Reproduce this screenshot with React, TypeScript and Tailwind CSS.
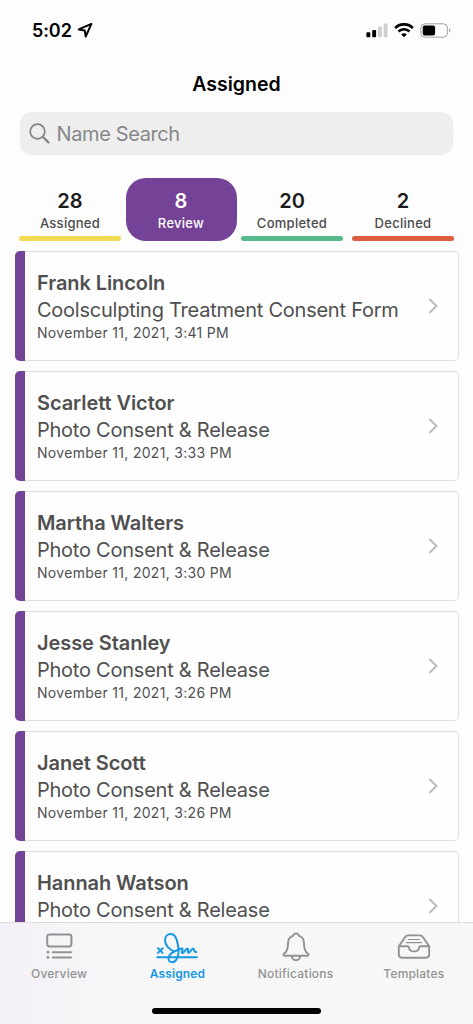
import React from "react";

const tabs = [
  { count: 28, label: "Assigned", bar: "bg-[#f0da54]" },
  { count: 8, label: "Review", bar: "", active: true },
  { count: 20, label: "Completed", bar: "bg-[#55bb8a]" },
  { count: 2, label: "Declined", bar: "bg-[#dc5c40]" },
];

const forms = [
  {
    name: "Frank Lincoln",
    form: "Coolsculpting Treatment Consent Form",
    date: "November 11, 2021, 3:41 PM",
  },
  {
    name: "Scarlett Victor",
    form: "Photo Consent & Release",
    date: "November 11, 2021, 3:33 PM",
  },
  {
    name: "Martha Walters",
    form: "Photo Consent & Release",
    date: "November 11, 2021, 3:30 PM",
  },
  {
    name: "Jesse Stanley",
    form: "Photo Consent & Release",
    date: "November 11, 2021, 3:26 PM",
  },
  {
    name: "Janet Scott",
    form: "Photo Consent & Release",
    date: "November 11, 2021, 3:26 PM",
  },
  {
    name: "Hannah Watson",
    form: "Photo Consent & Release",
    date: "",
  },
];

const StatusBar = () => (
  <div className="flex h-[60px] shrink-0 items-center justify-between pl-[32px] pr-[22px]">
    <div className="flex items-center gap-[5px] pt-px">
      <span className="text-[18px] font-semibold leading-6 tracking-[-0.1px]">
        5:02
      </span>
      <svg width="17" height="17" viewBox="0 0 17 17" fill="none">
        <path
          d="M14.4 1.8 1.8 7.4l6 1.2.9 6z"
          stroke="#000"
          strokeWidth="2"
          strokeLinejoin="round"
        />
      </svg>
    </div>
    <div className="flex items-center gap-[6px]">
      <svg width="22" height="15" viewBox="0 0 22 15">
        <rect x="0.4" y="9.3" width="3.9" height="5" rx="1" />
        <rect x="6.2" y="7" width="3.9" height="7.3" rx="1" />
        <rect x="12" y="3.6" width="3.9" height="10.7" rx="1" fill="#cfcfcf" />
        <rect x="17.7" y="0.4" width="3.9" height="13.9" rx="1" fill="#cfcfcf" />
      </svg>
      <svg width="20" height="15" viewBox="0 0 20 15" fill="none" stroke="#000">
        <path d="M1.2 5a12.4 12.4 0 0 1 17.6 0" strokeWidth="2.7" />
        <path d="M4.5 8.5a7.8 7.8 0 0 1 11 0" strokeWidth="2.6" />
        <path
          d="M10 14.2 7.2 11.5a3.9 3.9 0 0 1 5.6 0z"
          fill="#000"
          stroke="none"
        />
      </svg>
      <svg width="31" height="15" viewBox="0 0 31 15" fill="none">
        <rect x="0.8" y="0.8" width="26.6" height="13.4" rx="4" stroke="#a3a3a3" />
        <rect x="2.7" y="2.6" width="12.4" height="9.8" rx="2" fill="#000" />
        <path d="M29.1 5.3v4.4c1.8-.8 1.8-3.6 0-4.4z" fill="#a3a3a3" />
      </svg>
    </div>
  </div>
);

const OverviewIcon = () => (
  <svg width="28" height="28" viewBox="0 0 28 28" fill="none" stroke="#929292" strokeWidth="2">
    <rect x="2.2" y="1.4" width="24.2" height="12" rx="2.4" />
    <path d="M7.8 19.2h18.2M7.8 24.4h18.2" strokeLinecap="round" />
    <path d="M2.9 19.2h.1M2.9 24.4h.1" strokeWidth="2.8" strokeLinecap="round" />
  </svg>
);

const SignatureIcon = () => (
  <svg
    width="42"
    height="34"
    viewBox="0 0 42 34"
    fill="none"
    stroke="#1497e5"
    strokeWidth="2"
    strokeLinecap="round"
    strokeLinejoin="round"
  >
    <path d="m2 18.3 4.6 4.6M6.6 18.3 2 22.9M1.3 27.2h39.6" />
    <path d="M18.6 21.6C12.8 19.4 9 14.8 9 10.3 9 6.6 11.6 4 14.9 4c3 0 5 2.4 6.1 6.8 1 3.9 1.9 7 1.6 11.2-.4 6.1-3 10.2-6.4 10.2-2.4 0-3.9-1.6-3.7-4 .3-3.5 4-6.2 8.6-7.9 2.8-1 4.8-2.3 5.3-1.6.7 1-1.4 4 0 4.3 1.6.4 3.3-4.6 5.1-4.6 1.6 0-.4 4.4 1.1 4.4 1.6 0 2.8-4.3 4.5-4.3 1.4 0 .2 3.6 3.2 3.6" />
  </svg>
);

const BellIcon = () => (
  <svg width="28" height="30" viewBox="0 0 28 30" fill="none" stroke="#929292" strokeWidth="1.9" strokeLinejoin="round">
    <path d="M14 1.5c-1.5 0-2.5.8-2.8 2.1C7.7 4.8 6 7.6 6 11.2c0 5.8-.9 8.3-3.7 10.3-1.3.9-1.2 2.3.2 2.3h23c1.4 0 1.5-1.4.2-2.3-2.8-2-3.7-4.5-3.7-10.3 0-3.6-1.7-6.4-5.2-7.6-.3-1.3-1.3-2.1-2.8-2.1z" />
    <path d="M9.8 24c.2 2.7 1.8 4.2 4.2 4.2s4-1.5 4.2-4.2" />
  </svg>
);

const TrayIcon = () => (
  <svg width="34" height="26" viewBox="0 0 34 26" fill="none" stroke="#929292" strokeWidth="1.9" strokeLinejoin="round">
    <path d="M1.8 12.2 8 3.2c.9-1.3 1.6-1.8 3.2-1.8h11.6c1.6 0 2.3.5 3.2 1.8l6.2 9v8.4c0 2-1.1 3.1-3.1 3.1H4.9c-2 0-3.1-1.1-3.1-3.1z" />
    <path d="M1.8 12.3h8.5c1.1 0 1.6.5 1.7 1.5.4 2.2 2.3 3.6 5 3.6s4.6-1.4 5-3.6c.1-1 .6-1.5 1.7-1.5h8.5" />
    <path d="M11.5 5.5h11M9.5 8.6h15" strokeWidth="1.2" strokeLinecap="round" />
  </svg>
);

const nav = [
  { label: "Overview", icon: <OverviewIcon /> },
  { label: "Assigned", icon: <SignatureIcon />, active: true },
  { label: "Notifications", icon: <BellIcon /> },
  { label: "Templates", icon: <TrayIcon /> },
];

export default function App() {
  return (
    <div className="flex h-[1024px] w-[473px] flex-col overflow-hidden bg-[#fdfdfd] font-['Inter',sans-serif] text-black">
      <StatusBar />

      <h1 className="h-[52px] shrink-0 pt-3 text-center text-[19.5px] font-semibold leading-6">
        Assigned
      </h1>

      <div className="ml-[19.5px] mr-5 flex h-[43px] shrink-0 items-center rounded-[12px] bg-[#eeeeee] pl-[9px]">
        <svg width="22" height="22" viewBox="0 0 22 22" fill="none" stroke="#848488">
          <circle cx="8.5" cy="8.5" r="7.3" strokeWidth="1.7" />
          <path d="m13.8 13.8 5.6 5.6" strokeWidth="2.2" strokeLinecap="round" />
        </svg>
        <span className="ml-[6px] text-[20px] leading-6 tracking-[-0.38px] text-[#87878b]">
          Name Search
        </span>
      </div>

      <div className="mx-[14.5px] mt-[23px] grid h-[63px] shrink-0 grid-cols-4">
        {tabs.map((tab) => (
          <div
            key={tab.label}
            className={
              tab.active
                ? "flex flex-col items-center rounded-[20px] bg-[#744296] pt-[11px] text-white"
                : "flex flex-col items-center pt-[11px] text-[#4a4a4a]"
            }
          >
            <span
              className={
                tab.active
                  ? "text-[20px] font-semibold leading-6"
                  : "text-[20px] font-semibold leading-6 text-[#1c1c1c]"
              }
            >
              {tab.count}
            </span>
            <span className="text-[13px] font-medium leading-5 tracking-[0.28px]">
              {tab.label}
            </span>
            {!tab.active && (
              <div className={`mt-[3px] h-[5px] w-[102px] rounded-full ${tab.bar}`} />
            )}
          </div>
        ))}
      </div>

      <div className="flex min-h-0 flex-1 flex-col gap-[10px] overflow-hidden px-[14.5px] pt-[10px]">
        {forms.map((item) => (
          <div key={item.name} className="flex h-[110px] shrink-0">
            <div className="w-[10px] shrink-0 rounded-l-[5px] bg-[#744296]" />
            <div className="flex flex-1 items-center justify-between rounded-r-[5px] border border-l-0 border-[#dedede] bg-[#fefefe] pl-[12.5px] pr-[19px]">
              <div className="whitespace-nowrap text-[#505050]">
                <p className="text-[20px] font-semibold leading-[27px] tracking-[-0.08px]">
                  {item.name}
                </p>
                <p className="text-[20px] leading-[27px] tracking-[-0.24px]">
                  {item.form}
                </p>
                <p className="h-[19px] text-[14px] leading-[17px] tracking-[0.3px]">
                  {item.date}
                </p>
              </div>
              <svg width="11" height="16" viewBox="0 0 11 16" fill="none">
                <path
                  d="m2 1.8 6.5 6.2L2 14.2"
                  stroke="#bdbdbd"
                  strokeWidth="2.1"
                  strokeLinecap="round"
                  strokeLinejoin="round"
                />
              </svg>
            </div>
          </div>
        ))}
      </div>

      <nav className="flex h-[102px] shrink-0 flex-col items-center border-t border-[#dcdcde] bg-linear-to-r from-[#f3f1f7] to-[#f7f7f7] to-30%">
        <div className="grid w-full grid-cols-4 pt-[7px]">
          {nav.map((item) => (
            <div key={item.label} className="flex flex-col items-center">
              <div className="flex h-[34px] items-center">{item.icon}</div>
              <span
                className={
                  item.active
                    ? "text-[12px] font-semibold leading-5 tracking-[0.1px] text-[#1497e5]"
                    : "text-[12px] font-medium leading-5 tracking-[0.2px] text-[#929292]"
                }
              >
                {item.label}
              </span>
            </div>
          ))}
        </div>
        <div className="mt-[24px] h-[6px] w-[169px] rounded-full bg-black" />
      </nav>
    </div>
  );
}
